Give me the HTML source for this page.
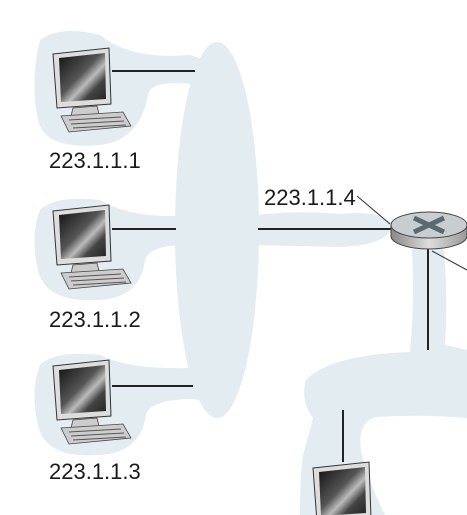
<!DOCTYPE html>
<html><head><meta charset="utf-8"><style>
html,body{margin:0;padding:0;background:#fff;width:467px;height:515px;overflow:hidden}
svg{display:block}
text{font-family:"Liberation Sans","DejaVu Sans",sans-serif;font-size:22px;fill:#1a1a1a}
</style></head><body>
<svg width="467" height="515" viewBox="0 0 467 515" xmlns="http://www.w3.org/2000/svg">
<defs>
<linearGradient id="scr" x1="0" y1="0" x2="1" y2="1">
<stop offset="0" stop-color="#111"/><stop offset="0.45" stop-color="#555"/><stop offset="0.6" stop-color="#bbb"/><stop offset="0.75" stop-color="#444"/><stop offset="1" stop-color="#222"/>
</linearGradient>
<linearGradient id="rt" x1="0" y1="0" x2="1" y2="0">
<stop offset="0" stop-color="#888"/><stop offset="0.5" stop-color="#ddd"/><stop offset="1" stop-color="#999"/>
</linearGradient>
<g id="pc">
<path d="M0,6 L56,0 L58,56 L4,60 Z" fill="#ddd" stroke="#333" stroke-width="1"/>
<path d="M6,10 L52,5 L53,51 L8,54 Z" fill="url(#scr)"/>
<path d="M20,60 L44,58 L46,66 L18,68 Z" fill="#ccc" stroke="#444" stroke-width="0.8"/>
<path d="M8,68 L70,64 L78,78 L16,84 Z" fill="#ccc" stroke="#444" stroke-width="0.8"/>
<path d="M16,72 L68,69 M18,76 L71,73 M20,80 L73,77" stroke="#555" stroke-width="1"/>
</g>
</defs>
<g fill="#e2ecf1">
<ellipse cx="217" cy="230" rx="42" ry="188"/>
<path d="M40,40 Q60,25 100,35 Q130,60 190,55 L205,60 L205,85 L190,84 Q150,80 148,95 Q140,140 100,145 Q45,150 38,120 Q30,80 40,40 Z"/>
<path d="M40,210 Q55,195 100,200 Q130,218 185,216 L185,245 Q150,245 145,260 Q140,300 95,300 Q45,302 38,270 Q30,235 40,210 Z"/>
<path d="M40,365 Q55,350 100,355 Q130,370 190,368 L200,372 L200,400 L190,399 Q150,400 146,415 Q140,455 95,455 Q45,458 38,425 Q30,390 40,365 Z"/>
<path d="M255,215 Q300,210 340,214 Q385,210 392,225 Q390,245 340,247 Q300,246 255,245 Z"/>
<path d="M412,250 Q428,240 444,250 Q448,300 445,345 L467,350 L467,418 Q420,414 375,417 Q355,425 362,455 Q372,490 385,515 L300,515 Q300,475 303,455 Q310,430 313,418 Q300,400 306,380 Q330,355 410,352 Q415,300 412,250 Z"/>
</g>
<g stroke="#222" stroke-width="2">
<line x1="112" y1="71" x2="195" y2="71"/>
<line x1="112" y1="229" x2="176" y2="229"/>
<line x1="112" y1="386" x2="193" y2="386"/>
<line x1="258" y1="229" x2="395" y2="229"/>
<line x1="428" y1="245" x2="428" y2="350"/>
<line x1="343" y1="410" x2="343" y2="462"/>
</g>
<g stroke="#333" stroke-width="1">
<line x1="357" y1="196" x2="390" y2="224"/>
<line x1="432" y1="251" x2="467" y2="270"/>
</g>
<use href="#pc" transform="translate(53,48)"/>
<use href="#pc" transform="translate(53,205)"/>
<use href="#pc" transform="translate(53,360)"/>
<g transform="translate(313,462)">
<path d="M0,6 L56,0 L58,56 L4,60 Z" fill="#ddd" stroke="#333" stroke-width="1"/>
<path d="M6,10 L52,5 L53,51 L8,54 Z" fill="url(#scr)"/>
</g>
<g>
<path d="M391,225 L391,236 A38,13 0 0 0 467,236 L467,225 Z" fill="url(#rt)" stroke="#444" stroke-width="1"/>
<ellipse cx="429" cy="225" rx="38" ry="13" fill="#c8cdd0" stroke="#444" stroke-width="1"/>
<path d="M414,218 L444,232 M444,218 L414,232" stroke="#5a6a70" stroke-width="5"/>
</g>
<text x="49" y="168">223.1.1.1</text>
<text x="49" y="327">223.1.1.2</text>
<text x="49" y="479">223.1.1.3</text>
<text x="264" y="205">223.1.1.4</text>
</svg>
</body></html>
